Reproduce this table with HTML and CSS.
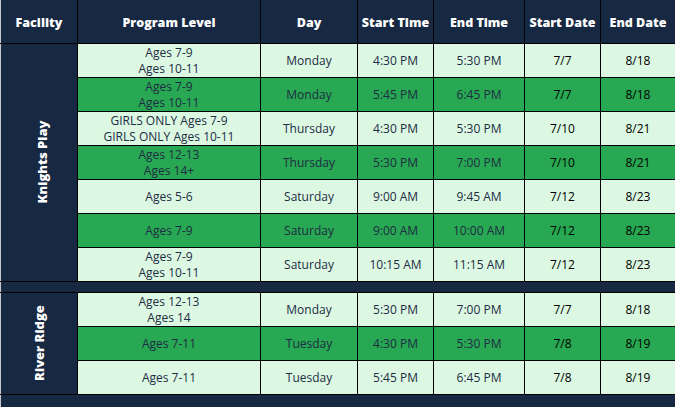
FILE: index.html
```html
<!DOCTYPE html>
<html>
<head>
<meta charset="utf-8">
<link rel="stylesheet" href="styles.css">
</head>
<body>
<div class="wrap">
<table class="sched">
  <colgroup>
    <col class="c-fac"><col class="c-prog"><col class="c-day"><col class="c-st"><col class="c-et"><col class="c-sd"><col class="c-ed">
  </colgroup>
  <thead>
    <tr><th>Facility</th><th>Program Level</th><th>Day</th><th>Start Time</th><th>End Time</th><th>Start Date</th><th>End Date</th></tr>
  </thead>
  <tbody>
    <tr class="lt">
      <td class="fac" rowspan="7"><span class="vert">Knights Play</span></td>
      <td>Ages 7-9<br>Ages 10-11</td><td>Monday</td><td>4:30 PM</td><td>5:30 PM</td><td class="dt">7/7</td><td class="dt">8/18</td>
    </tr>
    <tr class="dk">
      <td>Ages 7-9<br>Ages 10-11</td><td>Monday</td><td>5:45 PM</td><td>6:45 PM</td><td class="dt">7/7</td><td class="dt">8/18</td>
    </tr>
    <tr class="lt">
      <td>GIRLS ONLY Ages 7-9<br>GIRLS ONLY Ages 10-11</td><td>Thursday</td><td>4:30 PM</td><td>5:30 PM</td><td class="dt">7/10</td><td class="dt">8/21</td>
    </tr>
    <tr class="dk">
      <td>Ages 12-13<br>Ages 14+</td><td>Thursday</td><td>5:30 PM</td><td>7:00 PM</td><td class="dt">7/10</td><td class="dt">8/21</td>
    </tr>
    <tr class="lt">
      <td>Ages 5-6</td><td>Saturday</td><td>9:00 AM</td><td>9:45 AM</td><td class="dt">7/12</td><td class="dt">8/23</td>
    </tr>
    <tr class="dk">
      <td>Ages 7-9</td><td>Saturday</td><td>9:00 AM</td><td>10:00 AM</td><td class="dt">7/12</td><td class="dt">8/23</td>
    </tr>
    <tr class="lt">
      <td>Ages 7-9<br>Ages 10-11</td><td>Saturday</td><td>10:15 AM</td><td>11:15 AM</td><td class="dt">7/12</td><td class="dt">8/23</td>
    </tr>
    <tr class="gap"><td colspan="7"></td></tr>
    <tr class="lt">
      <td class="fac" rowspan="3"><span class="vert">River Ridge</span></td>
      <td>Ages 12-13<br>Ages 14</td><td>Monday</td><td>5:30 PM</td><td>7:00 PM</td><td class="dt">7/7</td><td class="dt">8/18</td>
    </tr>
    <tr class="dk">
      <td>Ages 7-11</td><td>Tuesday</td><td>4:30 PM</td><td>5:30 PM</td><td class="dt">7/8</td><td class="dt">8/19</td>
    </tr>
    <tr class="lt">
      <td>Ages 7-11</td><td>Tuesday</td><td>5:45 PM</td><td>6:45 PM</td><td class="dt">7/8</td><td class="dt">8/19</td>
    </tr>
    <tr class="end"><td colspan="7"></td></tr>
  </tbody>
</table>
</div>
</body>
</html>
```

FILE: styles.css
```css
html, body {
  margin: 0;
  padding: 0;
  background: #ffffff;
}
.wrap {
  width: 675px;
  height: 407px;
  overflow: hidden;
  background: #172842;
}
.sched {
  width: 675px;
  table-layout: fixed;
  border-collapse: collapse;
  font-family: "Open Sans", "Liberation Sans", sans-serif;
  font-size: 12px;
  line-height: 16px;
}
.c-fac { width: 77px; }
.c-prog { width: 183px; }
.c-day { width: 97px; }
.c-st { width: 76px; }
.c-et { width: 91px; }
.c-sd { width: 76px; }
.c-ed { width: 75px; }

.sched th {
  background: #172842;
  color: #ffffff;
  font-weight: 800;
  font-size: 12.5px;
  height: 41px;
  padding: 2px 0 0;
  border: 1px solid #000;
  border-top: none;
  text-align: center;
}
.sched th:first-child { border-left: 1px solid #c8c8c8; }

.sched td {
  border: 1px solid #000;
  height: 33px;
  padding: 0;
  text-align: center;
  vertical-align: middle;
  color: #1e2c44;
}
.sched td.dt { color: #000; }
.lt td { background: #dcf8e3; }
.dk td { background: #28a852; }

.sched td.fac {
  background: #172842;
  border-left: 1px solid #c8c8c8;
}
.vert {
  display: inline-block;
  transform: rotate(-90deg);
  white-space: nowrap;
  color: #ffffff;
  font-weight: 800;
  font-size: 13px;
}
.gap td {
  background: #172842;
  height: 10px;
  border-left: 1px solid #c8c8c8;
}
.end td {
  background: #172842;
  height: 12px;
  border-left: 1px solid #c8c8c8;
  border-bottom: none;
}
```
